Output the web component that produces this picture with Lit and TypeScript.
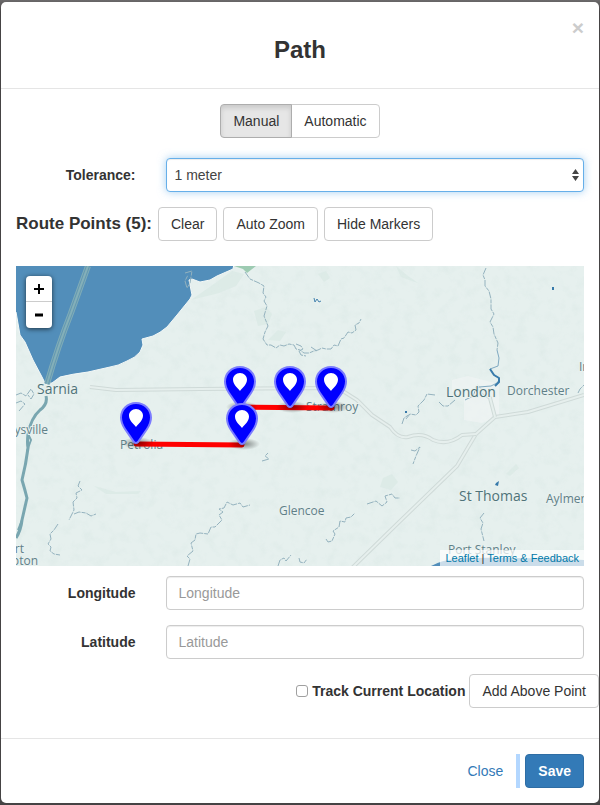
import { LitElement, html, css, svg } from "lit";
import { customElement, property, state } from "lit/decorators.js";
import { classMap } from "lit/directives/class-map.js";

interface Place {
  name: string;
  x: number;
  y: number;
  major?: boolean;
  end?: boolean;
}

const PLACES: Place[] = [
  { name: "Sarnia", x: 21, y: 128, major: true },
  { name: "London", x: 430, y: 131, major: true },
  { name: "Dorchester", x: 491, y: 129 },
  { name: "St Thomas", x: 443, y: 235, major: true },
  { name: "Aylmer", x: 530, y: 237 },
  { name: "Glencoe", x: 263, y: 249 },
  { name: "Petrolia", x: 104, y: 183 },
  { name: "Strathroy", x: 290, y: 145 },
  { name: "Port Stanley", x: 432, y: 288 },
  { name: "Ingersoll", x: 563, y: 105 },
  { name: "Marysville", x: 32, y: 168, end: true },
  { name: "Port", x: 8, y: 287, end: true },
  { name: "Lambton", x: 22, y: 299, end: true },
];

/* Centre and top of each route pin on the map canvas. */
const PINS = [
  { x: 224, y: 100 },
  { x: 274, y: 100 },
  { x: 315, y: 100 },
  { x: 120, y: 136 },
  { x: 226, y: 137 },
];

const ROADS = [
  "M336 302L379 260L441 200L460 168L479 151L512 146L568 129",
  "M74 121L100 124L184 123L322 122L341 134L356 149L374 161Q382 173 392 171Q406 166 417 174Q432 180 446 169L460 168",
  "M479 151L474 132L460 120",
];

const RIVERS = [
  "M229 6L234 13L243 17L248 20L247 27L250 31L248 35L251 40L248 50L252 60L249 66L247 73L251 79L255 79L260 82L264 79L268 80L273 78L278 79L280 83L284 84L288 87L293 87L298 85L302 84L306 82L310 83L315 83L318 79L322 80L325 73L328 72L332 66L336 67L340 64L339 59L343 57L345 53",
  "M280 78L285 80L287 83L283 85L285 89L290 90M295 81L301 85",
  "M470 2L467 9L469 14L469 20L473 25L475 33L475 43L478 48L474 56L477 61L478 68L482 77L481 84",
  "M419 129L411 128L408 134L402 140L403 146L400 149L394 148L390 153M423 136L427 140L432 140L439 134",
  "M64 215L62 220L66 224L60 227L61 232L57 236L58 244L53 254M58 248L63 246L70 247L75 250L80 248M42 258L38 264L34 268L35 273L32 278L35 281L34 285L38 288L44 289",
  "M172 300L174 293L171 290L177 285L175 277L179 274L180 268L184 267L192 268L195 261L199 261L206 254L203 249L207 246L203 243L208 242L211 236L217 239L224 237L227 241L234 239",
  "M310 273L312 276L316 275L319 268L317 265L323 261L324 255L329 256L330 252L335 251L339 247M351 238L360 235L366 240L371 236L369 230L376 228L379 232L384 232M262 300L264 294L268 292L270 295L275 289M283 292L284 296L288 297L291 293",
  "M246 195L253 193L249 190L252 187M395 184L399 185L404 181L400 190L397 198M386 158L388 152L394 148M468 247L464 252L467 257L465 263L468 275",
  "M0 129L5 127L10 130L15 123L18 128L15 133L12 129M0 137L5 135L9 138L3 145",
  "M169 7L176 5L174 17L171 22L169 15L172 9M562 127L564 123L568 119",
];

const LAND_PATCHES = [
  "M175 34L195 20L216 5L228 8L220 20L203 27Z",
  "M238 45L250 41L256 48L252 58L242 60Z",
  "M302 8L310 5L314 12L308 16Z",
  "M367 212L376 208L382 216L375 224L364 221Z",
  "M380 0L392 10L402 17L385 11Z",
  "M262 64L270 66L264 75L252 74Z",
  "M490 208L500 198L503 202L494 210Z",
  "M78 220L100 226L125 225L122 228L90 228Z",
];

@customElement("route-map")
export class RouteMap extends LitElement {
  @property({ type: Boolean }) markers = true;

  static styles = css`
    :host {
      display: block;
      position: relative;
      height: 300px;
      overflow: hidden;
      background: #e4efed;
      font-family: "Liberation Sans", Arial, sans-serif;
    }
    .canvas {
      display: block;
      width: 100%;
      height: 100%;
    }
    .place {
      font: 500 12px "Open Sans", "Noto Sans", sans-serif;
      fill: #5f8088;
      stroke: #e8f1ef;
      stroke-width: 2px;
      paint-order: stroke;
    }
    .major {
      font-size: 14px;
      fill: #4f7379;
    }
    .zoom {
      position: absolute;
      top: 10px;
      left: 10px;
      width: 26px;
      display: grid;
      border-radius: 4px;
      background: #fff;
      box-shadow: 0 1px 5px rgba(0, 0, 0, 0.65);
    }
    .zoom button {
      height: 26px;
      border: 0;
      padding: 0;
      background: none;
      display: grid;
      place-items: center;
      cursor: pointer;
    }
    .zoom button:first-child {
      border-bottom: 1px solid #ccc;
    }
    .credit {
      position: absolute;
      right: 0;
      bottom: 0;
      padding: 0 5px;
      background: rgba(255, 255, 255, 0.7);
      color: #333;
      font-size: 11px;
      line-height: 16px;
    }
    .credit a {
      color: #0078a8;
      text-decoration: none;
    }
  `;

  private pin(p: { x: number; y: number }) {
    return svg`<g transform="translate(${p.x - 16} ${p.y})">
      <ellipse cx="18" cy="41" rx="16" ry="6" fill="url(#shade)"/>
      <path d="M16 1C7.500 1 1 7.500 1 15.500C1 20 3 24 5 27L14 40Q16 42 18 40L27 27C29 24 31 20 31 15.500C31 7.500 24.500 1 16 1Z" fill="#00f" stroke="#7b7bff" stroke-width="2"/>
      <path d="M16 7C12 7 9 10 9 13.500C9 18.500 13 21 16 25C19 21 23 18.500 23 13.500C23 10 20 7 16 7Z" fill="#fff"/>
    </g>`;
  }

  render() {
    return html`
      <svg class="canvas" viewBox="0 0 568 300" preserveAspectRatio="xMidYMid slice" role="img" aria-label="Route map">
        <defs>
          <radialGradient id="shade">
            <stop offset="0" stop-color="#000" stop-opacity=".45" />
            <stop offset="1" stop-color="#000" stop-opacity="0" />
          </radialGradient>
          <filter id="terrain" x="0" y="0" width="100%" height="100%">
            <feTurbulence type="fractalNoise" baseFrequency=".09" numOctaves="3" seed="7" />
            <feColorMatrix values="0 0 0 0 .72  0 0 0 0 .82  0 0 0 0 .80  2.400 0 0 0 -1.080" />
          </filter>
        </defs>
        <rect width="568" height="300" fill="#e6f0ee" />
        ${LAND_PATCHES.map((d) => svg`<path d=${d} fill="#d9e8e4" opacity=".7"/>`)}
        <rect width="568" height="300" filter="url(#terrain)" opacity=".6" />
        <path d="M436 114L452 110L483 118V150L466 157L448 154V130L436 126Z" fill="#eff4f3" opacity=".7" />

        <path
          d="M-2 -2H218L217 3L201 10L194 14L184 16L176 13L173 14L176 29L174 33L161 49L151 61Q144 67 137 70L126 73L127 79L124 86Q119 92 111 95Q102 100 94 101L72 106Q56 108 44 111L36 117H29L26 111L17 94L9 76L4 69L0 46H-2Z"
          fill="#528eba" stroke="#f3f8f7" stroke-width="1"
        />
        <path d="M218 0H240L231 7L227 3Z" fill="#9dcbb2" />
        <path d="M415 300Q426 294 440 293Q460 290 568 294V300Z" fill="#528eba" />

        <g fill="none" stroke-linejoin="round">
          <path d="M72 0L55 47Q42 80 31 118" stroke="#80adb8" stroke-width="6" />
          <path d="M72 0L55 47Q42 80 31 118" stroke="#6599b1" stroke-width="4" />
          <path d="M72 0L55 47Q42 80 31 118" stroke="#84b0b9" stroke-width="2" />
          <path d="M30 130Q32 138 24 144Q15 152 12 168Q11 177 12 182Q10 198 6 214Q9 224 11 232Q8 245 6 254Q5 264 0 272" stroke="#79a6b0" stroke-width="3" />
          <path d="M12 168L15 174L11 185M6 254L2 264" stroke="#79a6b0" stroke-width="2" />
          ${ROADS.map((d) => svg`
            <path d=${d} stroke="#cfdad8" stroke-width="4"/>
            <path d=${d} stroke="#e6efed" stroke-width="2"/>`)}
          ${RIVERS.map((d) => svg`<path d=${d} stroke="#94b2be" stroke-width="1" stroke-dasharray="7 1 4 1"/>`)}
          <path d="M481 84L483 92L482 100L474 103L479 110Q486 111 481 117L475 120L463 121L459 125L457 130L449 134" stroke="#7fa9c1" stroke-width="1" />
          <path d="M474 103L478 109L483 112L483 116L479 120" stroke="#397bab" stroke-width="2" />
          <path d="M298 32L299 36L301 33L303 36L305 35" stroke="#4482ae" stroke-width="1" />
        </g>
        <path d="M536 21h2v3h-2zM389 145h2v2h-2zM480 217l3-2-1 5-3-1z" fill="#3779aa" />

        ${PLACES.map((p) => svg`<text class=${p.major ? "place major" : "place"} x=${p.x} y=${p.y}
          text-anchor=${p.end ? "end" : "start"}>${p.name}</text>`)}

        <path d="M316 142L224 141M226 179L120 178" fill="none" stroke="#f00" stroke-width="5" stroke-linecap="round" />
        ${this.markers ? PINS.map((p) => this.pin(p)) : ""}
      </svg>
      <div class="zoom">
        <button type="button" aria-label="Zoom in">
          <svg width="10" height="10"><path d="M0 5H10M5 0V10" stroke="#000" stroke-width="2" /></svg>
        </button>
        <button type="button" aria-label="Zoom out">
          <svg width="8" height="4"><path d="M0 2H8" stroke="#000" stroke-width="3" /></svg>
        </button>
      </div>
      <div class="credit"><a href="#leaflet">Leaflet</a> | <a href="#terms">Terms &amp; Feedback</a></div>
    `;
  }
}

@customElement("app-root")
export class AppRoot extends LitElement {
  @state() private mode = "Manual";
  @state() private markers = true;

  static styles = css`
    :host {
      display: block;
      box-sizing: border-box;
      min-height: 100vh;
      padding: 2px 1px;
      background: linear-gradient(#6c6a6b, #454344 12px);
      color: #333;
      font: 14px/20px "Liberation Sans", Arial, sans-serif;
    }
    * {
      box-sizing: border-box;
    }
    .modal {
      background: #fff;
      border-radius: 5px;
    }
    header {
      position: relative;
      display: grid;
      justify-items: center;
      padding: 35px 15px 25px;
      border-bottom: 1px solid #e5e5e5;
    }
    h1 {
      margin: 0;
      font-size: 24px;
      line-height: 26px;
    }
    .dismiss {
      position: absolute;
      top: 15px;
      right: 15px;
      padding: 0;
      border: 0;
      background: none;
      color: #ccc;
      font: bold 21px/21px "Liberation Sans", Arial, sans-serif;
      cursor: pointer;
    }
    .body {
      padding: 15px 0 30px;
    }
    .btn {
      height: 34px;
      padding: 0 12px;
      border: 1px solid #ccc;
      border-radius: 4px;
      background: #fff;
      color: #333;
      font: inherit;
      white-space: nowrap;
      cursor: pointer;
    }
    .modes {
      display: flex;
      justify-content: center;
      margin-bottom: 20px;
    }
    .modes .btn:first-child {
      border-radius: 4px 0 0 4px;
    }
    .modes .btn:last-child {
      border-radius: 0 4px 4px 0;
      margin-left: -1px;
    }
    .modes .active {
      position: relative;
      background: #e6e6e6;
      border-color: #adadad;
      box-shadow: inset 0 3px 5px rgba(0, 0, 0, 0.125);
    }
    .row {
      display: grid;
      grid-template-columns: 1fr 3fr;
      align-items: center;
      margin-bottom: 15px;
    }
    .row label {
      padding: 0 15px;
      text-align: right;
      font-weight: bold;
    }
    .field {
      position: relative;
      padding: 0 15px;
    }
    .control {
      display: block;
      width: 100%;
      height: 34px;
      padding: 0 12px;
      border: 1px solid #ccc;
      border-radius: 4px;
      background: #fff;
      box-shadow: inset 0 1px 1px rgba(0, 0, 0, 0.075);
      color: #555;
      font: inherit;
      outline: 0;
      appearance: none;
    }
    .control::placeholder {
      color: #999;
    }
    select.control {
      padding: 0 8px;
      color: #444;
      border-color: #66afe9;
      box-shadow: inset 0 1px 1px rgba(0, 0, 0, 0.075), 0 0 8px rgba(102, 175, 233, 0.6);
    }
    .arrows {
      position: absolute;
      right: 20px;
      top: 11px;
      pointer-events: none;
    }
    .points {
      display: flex;
      align-items: center;
      gap: 6px;
      padding: 0 15px;
      margin-bottom: 25px;
    }
    h2 {
      margin: 0;
      font-size: 17px;
      line-height: 20px;
      white-space: nowrap;
    }
    route-map {
      margin: 0 15px 10px;
    }
    .add {
      display: flex;
      justify-content: flex-end;
      align-items: center;
      gap: 4px;
    }
    .track {
      display: flex;
      align-items: center;
      gap: 4px;
      font-weight: bold;
    }
    .track input {
      appearance: none;
      width: 12px;
      height: 12px;
      margin: 0;
      border: 1px solid #a0a0a0;
      border-radius: 3px;
      background: #fff;
    }
    .track input:checked {
      background: #337ab7;
    }
    footer {
      display: flex;
      justify-content: flex-end;
      padding: 15px;
      border-top: 1px solid #e5e5e5;
    }
    .link {
      border-color: transparent;
      color: #337ab7;
    }
    .divider {
      width: 4px;
      margin-right: 5px;
      background: #b3d7ff;
    }
    .primary {
      background: #337ab7;
      border-color: #2e6da4;
      color: #fff;
      font-weight: bold;
    }
  `;

  render() {
    return html`
      <section class="modal" role="dialog" aria-labelledby="title">
        <header>
          <h1 id="title">Path</h1>
          <button class="dismiss" type="button" aria-label="Dismiss">×</button>
        </header>
        <div class="body">
          <div class="modes">
            ${["Manual", "Automatic"].map(
              (m) => html`<button
                type="button"
                class=${classMap({ btn: true, active: this.mode === m })}
                @click=${() => (this.mode = m)}
              >${m}</button>`
            )}
          </div>
          <div class="row">
            <label for="tolerance">Tolerance:</label>
            <div class="field">
              <select class="control" id="tolerance">
                <option>1 meter</option>
                <option>5 meters</option>
                <option>10 meters</option>
              </select>
              <svg class="arrows" width="7" height="12">
                <path d="M0 5L3.500 0L7 5ZM0 7H7L3.500 12Z" fill="#444" />
              </svg>
            </div>
          </div>
          <div class="points">
            <h2>Route Points (5):</h2>
            <button class="btn" type="button">Clear</button>
            <button class="btn" type="button">Auto Zoom</button>
            <button class="btn" type="button" @click=${() => (this.markers = !this.markers)}>
              ${this.markers ? "Hide" : "Show"} Markers
            </button>
          </div>
          <route-map .markers=${this.markers}></route-map>
          <div class="row">
            <label for="lon">Longitude</label>
            <div class="field"><input class="control" id="lon" type="text" placeholder="Longitude" /></div>
          </div>
          <div class="row">
            <label for="lat">Latitude</label>
            <div class="field"><input class="control" id="lat" type="text" placeholder="Latitude" /></div>
          </div>
          <div class="add">
            <label class="track"><input type="checkbox" />Track Current Location</label>
            <button class="btn" type="button">Add Above Point</button>
          </div>
        </div>
        <footer>
          <button class="btn link" type="button">Close</button>
          <span class="divider"></span>
          <button class="btn primary" type="button">Save</button>
        </footer>
      </section>
    `;
  }
}
